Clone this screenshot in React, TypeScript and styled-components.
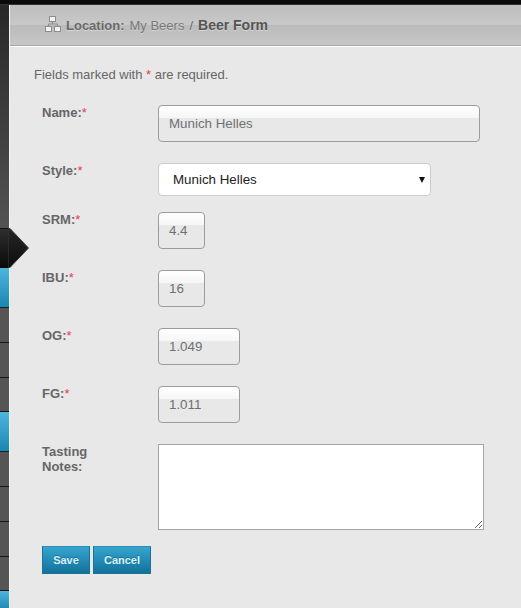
import React from 'react';
import styled, { createGlobalStyle } from 'styled-components';

const GlobalStyle = createGlobalStyle`
  html, body {
    margin: 0;
    height: 100%;
    overflow: hidden;
    background: #e8e8e8;
  }
  body {
    font-family: "Liberation Sans", Arial, sans-serif;
    font-size: 13px;
    color: #666;
  }
`;

const Page = styled.div`
  display: flex;
  flex-direction: column;
  height: 608px;
`;

// black strip above everything
const TopBar = styled.div`
  height: 4px;
  flex: none;
  background: #0a0a0a;
  border-bottom: 1px solid #333;
`;

const Body = styled.div`
  display: flex;
  flex: 1;
  min-height: 0;
`;

// collapsed nav on the left, only its right edge is visible
const Sidebar = styled.div`
  position: relative;
  width: 9px;
  flex: none;
  display: flex;
  flex-direction: column;
  background: #515151;
  overflow: visible;
`;

const NavDark = styled.div<{ $h: number }>`
  height: ${(p) => p.$h}px;
  flex: none;
  background: linear-gradient(#282828, #535353);
`;

const NavActive = styled.div`
  position: relative;
  height: 40px;
  flex: none;
  background: linear-gradient(#2e2e2e, #0a0a0a);
  border-top: 1px solid #111;
  box-sizing: border-box;
`;

// arrow sticking out of the active nav item, over the content
const NavArrow = styled.svg`
  position: absolute;
  left: 8px;
  top: -1px;
  width: 21px;
  height: 40px;
  z-index: 2;
`;

const NavBlue = styled.div<{ $h: number }>`
  height: ${(p) => p.$h}px;
  flex: none;
  box-sizing: border-box;
  background: linear-gradient(#4fb6de, #1a86ae);
  border-bottom: 1px solid #123;
`;

const NavGrey = styled.div<{ $h: number }>`
  height: ${(p) => p.$h}px;
  flex: none;
  box-sizing: border-box;
  background: #555;
  border-bottom: 1px solid #161616;
`;

const Main = styled.div`
  flex: 1;
  min-width: 0;
  border-left: 1px solid #f4f4f4;
`;

const Header = styled.div`
  height: 41px;
  box-sizing: border-box;
  display: flex;
  align-items: center;
  padding: 0 0 0 35px;
  background: linear-gradient(#bebebe 0%, #c8c8c8 49%, #bbb 50%, #c7c7c7 100%);
  border-bottom: 1px solid #a9a9a9;
  box-shadow: 0 1px 0 #fff;
  text-shadow: 0 1px 0 rgba(255, 255, 255, 0.35);
`;

const SiteIcon = styled.svg`
  width: 16px;
  height: 16px;
  margin: -2px 5px 0 0;
  flex: none;
`;

const CrumbLabel = styled.span`
  font-weight: bold;
  color: #6a6a6a;
  margin-right: 5px;
`;

const CrumbLink = styled.span`
  color: #787878;
  margin-right: 5px;
`;

const CrumbCurrent = styled.span`
  font-size: 14px;
  font-weight: bold;
  color: #555;
  margin-left: 5px;
`;

const Content = styled.div`
  padding: 21px 0 0 24px;
`;

const Note = styled.p`
  margin: 0 0 23px;
  font-size: 13px;
  line-height: 15px;
`;

const Star = styled.span`
  color: #e63c50;
  font-weight: normal;
`;

const Form = styled.form`
  display: flex;
  flex-direction: column;
  padding-left: 8px;
`;

const Row = styled.div<{ $gap: number }>`
  display: flex;
  align-items: flex-start;
  margin-bottom: ${(p) => p.$gap}px;
`;

const Label = styled.label`
  width: 116px;
  flex: none;
  font-size: 13px;
  line-height: 15px;
  font-weight: bold;
  color: #666;
`;

const TextField = styled.input<{ $w: number }>`
  width: ${(p) => p.$w}px;
  height: 37px;
  box-sizing: border-box;
  margin: 0;
  padding: 0 10px 0;
  border: 1px solid #9c9c9c;
  border-radius: 4px;
  outline: none;
  font: 13.33px "Liberation Sans", Arial, sans-serif;
  color: #707070;
  background: linear-gradient(#fff 0, #f6f6f6 12px, #e8e8e8 12px);
`;

const SelectWrap = styled.div`
  position: relative;
  width: 273px;
  height: 33px;
  &::after {
    content: '';
    position: absolute;
    right: 6px;
    top: 14px;
    border-left: 3px solid transparent;
    border-right: 3px solid transparent;
    border-top: 6px solid #111;
    pointer-events: none;
  }
`;

const StyleSelect = styled.select`
  appearance: none;
  display: block;
  width: 100%;
  height: 100%;
  box-sizing: border-box;
  margin: 0;
  padding: 0 14px;
  border: 1px solid #ccc;
  border-radius: 4px;
  outline: none;
  font: 13.33px "Liberation Sans", Arial, sans-serif;
  color: #222;
  background-color: #fff;
`;

const Notes = styled.textarea`
  display: block;
  width: 326px;
  height: 86px;
  box-sizing: border-box;
  margin: 0;
  padding: 4px;
  border: 1px solid #a5a5a5;
  border-radius: 0;
  outline: none;
  background: #fff;
`;

const Buttons = styled.div`
  display: flex;
  gap: 3px;
`;

const Button = styled.button<{ $w: number }>`
  width: ${(p) => p.$w}px;
  height: 28px;
  box-sizing: border-box;
  margin: 0;
  padding: 0;
  border: 1px solid #1a7396;
  border-top-color: #2c8fb6;
  border-radius: 0;
  font: bold 11px "Liberation Sans", Arial, sans-serif;
  color: #d6f1fb;
  text-shadow: 0 -1px 0 rgba(0, 0, 0, 0.25);
  background: linear-gradient(#36a5cf, #12729a);
`;

const numbers = [
  { label: 'SRM:', value: '4.4', width: 47 },
  { label: 'IBU:', value: '16', width: 47 },
  { label: 'OG:', value: '1.049', width: 82 },
  { label: 'FG:', value: '1.011', width: 82 },
];

const navBelowArrow = [
  { kind: 'blue', h: 40 },
  { kind: 'grey', h: 35 },
  { kind: 'grey', h: 35 },
  { kind: 'grey', h: 34 },
  { kind: 'blue', h: 40 },
  { kind: 'grey', h: 35 },
  { kind: 'grey', h: 35 },
  { kind: 'grey', h: 35 },
  { kind: 'grey', h: 34 },
  { kind: 'blue', h: 20 },
];

function App() {
  return (
    <>
      <GlobalStyle />
      <Page>
        <TopBar />
        <Body>
          <Sidebar>
            <NavDark $h={223} />
            <NavActive>
              <NavArrow viewBox="0 0 21 40">
                <defs>
                  <linearGradient id="arrowFill" x1="0" y1="0" x2="0" y2="1">
                    <stop offset="0" stopColor="#262626" />
                    <stop offset="1" stopColor="#0c0c0c" />
                  </linearGradient>
                </defs>
                <path d="M0 0.5H2L20.5 20L2 39.5H0Z" fill="url(#arrowFill)" stroke="#3d3d3d" strokeWidth="1" />
              </NavArrow>
            </NavActive>
            {navBelowArrow.map((item, i) =>
              item.kind === 'blue' ? (
                <NavBlue key={i} $h={item.h} />
              ) : (
                <NavGrey key={i} $h={item.h} />
              ),
            )}
          </Sidebar>
          <Main>
            <Header>
              <SiteIcon viewBox="0 0 16 16">
                <g fill="#f2f2f2" stroke="#8c8c8c" strokeWidth="1">
                  <rect x="4.5" y="0.5" width="6" height="5" />
                  <rect x="0.5" y="10.5" width="6" height="5" />
                  <rect x="9.5" y="10.5" width="6" height="5" />
                </g>
                <path d="M7.5 5.5V8M3.5 10.5V8H12.5V10.5" fill="none" stroke="#8c8c8c" strokeWidth="1" />
              </SiteIcon>
              <CrumbLabel>Location:</CrumbLabel>
              <CrumbLink>My Beers</CrumbLink>/
              <CrumbCurrent>Beer Form</CrumbCurrent>
            </Header>
            <Content>
              <Note>
                Fields marked with <Star>*</Star> are required.
              </Note>
              <Form>
                <Row $gap={21}>
                  <Label>
                    Name:<Star>*</Star>
                  </Label>
                  <TextField $w={322} defaultValue="Munich Helles" readOnly />
                </Row>
                <Row $gap={16}>
                  <Label>
                    Style:<Star>*</Star>
                  </Label>
                  <SelectWrap>
                    <StyleSelect defaultValue="Munich Helles">
                      <option>Munich Helles</option>
                    </StyleSelect>
                  </SelectWrap>
                </Row>
                {numbers.map((f) => (
                  <Row key={f.label} $gap={21}>
                    <Label>
                      {f.label}
                      <Star>*</Star>
                    </Label>
                    <TextField $w={f.width} defaultValue={f.value} readOnly />
                  </Row>
                ))}
                <Row $gap={16}>
                  <Label>
                    Tasting
                    <br />
                    Notes:
                  </Label>
                  <Notes />
                </Row>
                <Buttons>
                  <Button type="button" $w={48}>
                    Save
                  </Button>
                  <Button type="button" $w={58}>
                    Cancel
                  </Button>
                </Buttons>
              </Form>
            </Content>
          </Main>
        </Body>
      </Page>
    </>
  );
}

export default App;
